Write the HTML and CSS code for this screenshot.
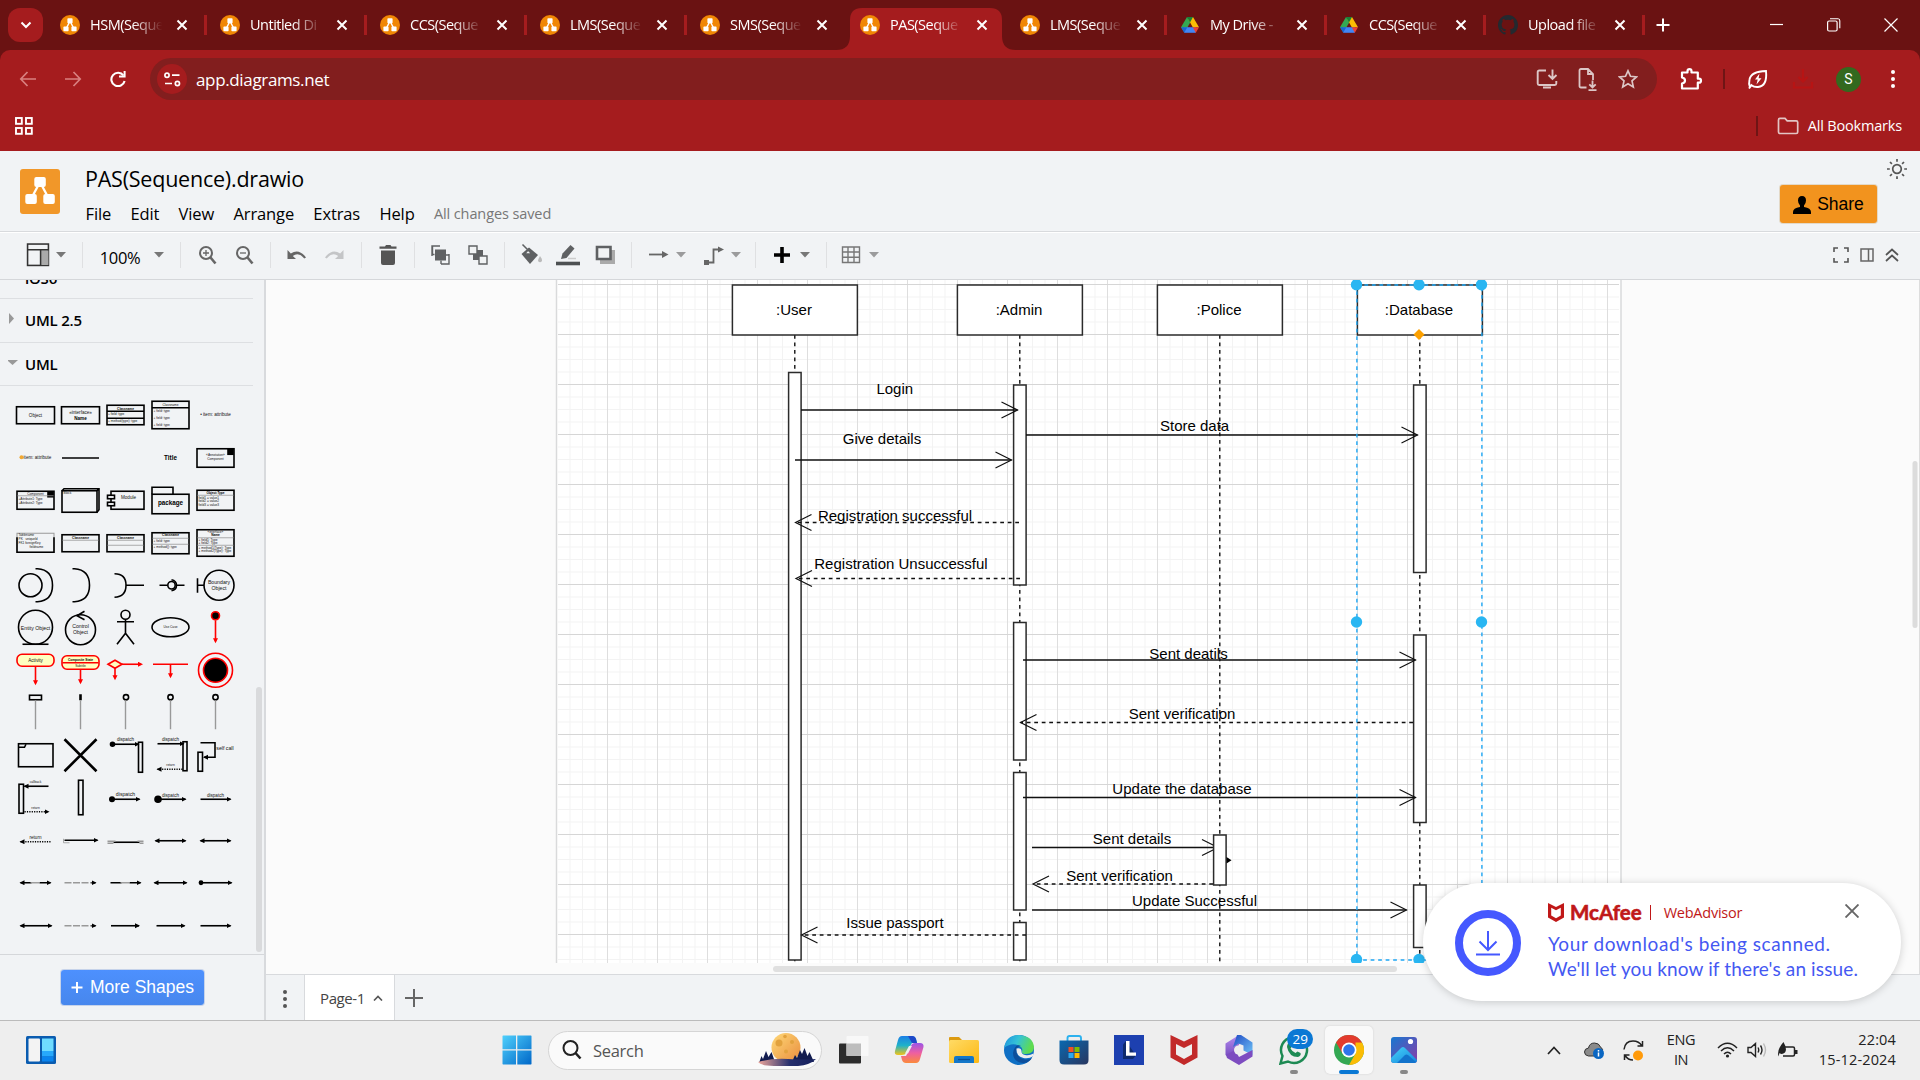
FILE: index.html
```html
<!DOCTYPE html>
<html lang="en">
<head>
<meta charset="utf-8">
<title>PAS(Sequence).drawio</title>
<link rel="stylesheet" href="styles.css">
</head>
<body>
<svg class="defs" width="0" height="0">
  <defs>
    <symbol id="x" viewBox="0 0 12 12"><path d="M1.5 1.5l9 9M10.5 1.5l-9 9" stroke="#fff" stroke-width="2" fill="none"/></symbol>
    <symbol id="fav" viewBox="0 0 20 20"><circle cx="10" cy="10" r="10" fill="#f08705"/><path d="M10 6L6 14M10 6l4 8" stroke="#fff" stroke-width="1.5"/><rect x="7.4" y="3.2" width="5.2" height="5" rx=".8" fill="#fff"/><rect x="3.4" y="11.6" width="5.2" height="4.6" rx=".8" fill="#fff"/><rect x="11.4" y="11.6" width="5.2" height="4.6" rx=".8" fill="#fff"/></symbol>
    <symbol id="drive" viewBox="0 0 20 20"><path d="M7 2h6l-3 5.5z" fill="#188038"/><path d="M7 2l3.2 5.5L4.5 17.5 1 12.2z" fill="#34a853"/><path d="M13 2l6 10.2h-6.2L7.8 3.5z" fill="#fbbc04"/><path d="M7 2h6l-3 5.4z" fill="#188038"/><path d="M4.2 12.2h11.6v5.6H4.2z" fill="#4285f4"/><path d="M1 12.2h6.3l-3.1 5.5z" fill="#1967d2"/><path d="M12.7 12.2H19l-3.2 5.5z" fill="#ea4335"/></symbol>
    <symbol id="caret" viewBox="0 0 10 6"><path d="M0 0h10L5 5.5z" fill="#777"/></symbol>
    <linearGradient id="win" x1="0" y1="0" x2="1" y2="1"><stop offset="0" stop-color="#4fd0fc"/><stop offset="1" stop-color="#0067c8"/></linearGradient>
    <linearGradient id="moon" x1="0" y1="0" x2="1" y2="1"><stop offset="0" stop-color="#ffd978"/><stop offset="1" stop-color="#e98d3d"/></linearGradient>
    <linearGradient id="lake" x1="0" x2="1"><stop offset="0" stop-color="#f0a79b"/><stop offset=".55" stop-color="#26306e"/><stop offset="1" stop-color="#15205c"/></linearGradient>
    <linearGradient id="copA" x1="0" y1="0" x2="0" y2="1"><stop offset="0" stop-color="#1b7fe6"/><stop offset=".5" stop-color="#1fb2c9"/><stop offset="1" stop-color="#f2c417"/></linearGradient>
    <linearGradient id="copB" x1="0" y1="0" x2="0" y2="1"><stop offset="0" stop-color="#9a54e8"/><stop offset=".5" stop-color="#ee5fa1"/><stop offset="1" stop-color="#fb8a3b"/></linearGradient>
    <linearGradient id="fold" x1="0" y1="0" x2="1" y2="1"><stop offset="0" stop-color="#ffdb66"/><stop offset="1" stop-color="#fdb813"/></linearGradient>
    <linearGradient id="edgeA" x1="0" y1="0" x2="1" y2=".3"><stop offset="0" stop-color="#1b8fe0"/><stop offset=".5" stop-color="#35c3d6"/><stop offset="1" stop-color="#5fdc4e"/></linearGradient>
    <linearGradient id="store" x1="0" y1="0" x2="1" y2="1"><stop offset="0" stop-color="#0a68b0"/><stop offset="1" stop-color="#28365f"/></linearGradient>
    <linearGradient id="mA" x1="0" y1="0" x2="0" y2="1"><stop offset="0" stop-color="#b58cf0"/><stop offset="1" stop-color="#6a3fb5"/></linearGradient>
    <linearGradient id="mB" x1="0" y1="0" x2="1" y2="1"><stop offset="0" stop-color="#1f4ac4"/><stop offset="1" stop-color="#6fc4f7"/></linearGradient>
    <linearGradient id="pho" x1="0" y1="0" x2="1" y2="1"><stop offset="0" stop-color="#1778d0"/><stop offset="1" stop-color="#8a3ca8"/></linearGradient>
    <linearGradient id="phb" x1="0" y1="0" x2="1" y2="1"><stop offset="0" stop-color="#45d3f8"/><stop offset="1" stop-color="#1484dd"/></linearGradient>
    <pattern id="grid" x="557" y="284" width="50" height="50" patternUnits="userSpaceOnUse">
      <path d="M13 0v50M25.500 0v50M38 0v50M0 13h50M0 25.500h50M0 38h50" stroke="#f3f3f3" stroke-width="1" fill="none"/>
      <path d="M.5 0v50" stroke="#dedede" stroke-width="1" fill="none"/>
      <path d="M0 .5h50" stroke="#d6d6d6" stroke-width="1" fill="none"/>
    </pattern>
    <marker id="ah" markerUnits="userSpaceOnUse" markerWidth="20" markerHeight="20" refX="17" refY="10" orient="auto"><path d="M1 2l16 8-16 8" fill="none" stroke="#111" stroke-width="1.2"/></marker>
    <marker id="se" markerUnits="userSpaceOnUse" markerWidth="6" markerHeight="6" refX="4" refY="2.5" orient="auto-start-reverse"><path d="M0 0l5 2.5L0 5z" fill="#000"/></marker>
    <marker id="sr" markerUnits="userSpaceOnUse" markerWidth="6" markerHeight="6" refX="3" refY="2.5" orient="auto"><path d="M0 0l5 2.5L0 5z" fill="#f00"/></marker>
  </defs>
</svg>

<header class="tabs">
  <button class="tab-search"><svg width="12" height="8" viewBox="0 0 12 8"><path d="M1.5 1.5L6 6l4.500-4.500" fill="none" stroke="#fff" stroke-width="2"/></svg></button>
  <div class="tab"><svg class="f"><use href="#fav"/></svg><span>HSM(Seque</span><svg class="c"><use href="#x"/></svg></div>
  <div class="tab"><svg class="f"><use href="#fav"/></svg><span>Untitled Di</span><svg class="c"><use href="#x"/></svg></div>
  <div class="tab"><svg class="f"><use href="#fav"/></svg><span>CCS(Seque</span><svg class="c"><use href="#x"/></svg></div>
  <div class="tab"><svg class="f"><use href="#fav"/></svg><span>LMS(Seque</span><svg class="c"><use href="#x"/></svg></div>
  <div class="tab bare"><svg class="f"><use href="#fav"/></svg><span>SMS(Seque</span><svg class="c"><use href="#x"/></svg></div>
  <div class="tab active"><svg class="shape" width="180" height="42" viewBox="0 0 180 42"><path d="M0 42q14 0 14-14V12Q14 0 26 0h128q12 0 12 12v16q0 14 14 14z" fill="#a51c1e"/></svg><svg class="f"><use href="#fav"/></svg><span>PAS(Seque</span><svg class="c"><use href="#x"/></svg></div>
  <div class="tab"><svg class="f"><use href="#fav"/></svg><span>LMS(Seque</span><svg class="c"><use href="#x"/></svg></div>
  <div class="tab slim"><svg class="f"><use href="#drive"/></svg><span>My Drive -</span><svg class="c"><use href="#x"/></svg></div>
  <div class="tab slim"><svg class="f"><use href="#drive"/></svg><span>CCS(Seque</span><svg class="c"><use href="#x"/></svg></div>
  <div class="tab slim"><svg class="f" viewBox="0 0 16 16"><path fill="#24292f" d="M8 0C3.58 0 0 3.58 0 8c0 3.54 2.290 6.530 5.470 7.590.4.070.55-.17.55-.38v-1.490c-2.010.37-2.530-.49-2.690-.94-.09-.23-.48-.94-.82-1.130-.28-.15-.68-.52-.01-.53.63-.01 1.080.58 1.230.82.72 1.210 1.870.87 2.330.66.07-.52.28-.87.51-1.070-1.780-.2-3.640-.89-3.640-3.950 0-.87.31-1.590.82-2.150-.08-.2-.36-1.020.08-2.120 0 0 .67-.21 2.200.82a7.600 7.600 0 014 0c1.530-1.040 2.200-.82 2.200-.82.44 1.100.16 1.920.08 2.120.51.56.82 1.270.82 2.150 0 3.070-1.870 3.750-3.650 3.950.29.25.54.73.54 1.480v2.200c0 .21.15.46.55.38A8 8 0 0016 8c0-4.420-3.580-8-8-8z"/></svg><span>Upload file</span><svg class="c"><use href="#x"/></svg></div>
  <svg class="newtab" width="14" height="14" viewBox="0 0 14 14"><path d="M7 .5v13M.5 7h13" stroke="#fff" stroke-width="2"/></svg>
  <div class="winctl">
    <svg width="14" height="14"><path d="M0 6.500h13" stroke="#fff" stroke-width="1.200"/></svg>
    <svg width="14" height="14"><rect x=".6" y="3" width="9.500" height="10" rx="1.500" fill="none" stroke="#fff" stroke-width="1.200"/><path d="M3 .8h8q1.800 0 1.800 2v7.500" fill="none" stroke="#fff" stroke-width="1.100"/></svg>
    <svg width="14" height="14"><path d="M.5.500l13 13M13.500.500l-13 13" stroke="#fff" stroke-width="1.200"/></svg>
  </div>
</header>

<div class="navwrap"><nav class="nav">
  <div class="navbtns">
    <svg width="18" height="16" viewBox="0 0 18 16"><path d="M17 8H2M8.500 1L1.800 8l6.700 7" fill="none" stroke="#d98080" stroke-width="1.700"/></svg>
    <svg width="18" height="16" viewBox="0 0 18 16"><path d="M1 8h15M9.500 1l6.700 7-6.700 7" fill="none" stroke="#d98080" stroke-width="1.700"/></svg>
    <svg width="18" height="16" viewBox="0 0 18 16"><path d="M14.500 4.500A6.700 6.700 0 1 0 15.600 10" fill="none" stroke="#fff" stroke-width="2.100"/><path d="M16.600 0v6.600H10v-2h4.600V0z" fill="#fff"/></svg>
  </div>
  <div class="omni">
    <span class="site"><svg width="17" height="15" viewBox="0 0 17 15"><g fill="none" stroke="#fff" stroke-width="1.700"><circle cx="3" cy="3.200" r="2.100"/><path d="M8 3.200h7.500M1 11.500h7"/><circle cx="13.400" cy="11.500" r="2.100"/></g></svg></span>
    <span class="url">app.diagrams.net</span>
    <span class="omni-icons">
      <svg width="22" height="22" viewBox="0 0 22 22" fill="none" stroke="#dcc6c6" stroke-width="1.900"><path d="M10 2.500H3.200q-1.500 0-1.500 1.500v11.500q0 1.500 1.500 1.500h15.600q1.500 0 1.500-1.500V13M7 19.500h8M16.500 1.500v9M12.500 7l4 4 4-4"/></svg>
      <svg width="22" height="24" viewBox="0 0 22 24" fill="none" stroke="#dcc6c6" stroke-width="1.800"><path d="M9.500 20.500H4q-1.500 0-1.500-1.500V3.500Q2.500 2 4 2h7l5 5v6M11 2v5h5M15.500 13.500v7M12.300 17.300l3.200 3.200 3.200-3.200M11.500 23.200h8"/></svg>
      <svg width="20" height="20" viewBox="0 0 20 20" fill="none" stroke="#dcc6c6" stroke-width="1.700"><path d="M10 1.800l2.500 5.500 6 .6-4.500 4 1.300 6L10 14.700 4.700 17.900l1.300-6-4.500-4 6-.6z"/></svg>
    </span>
  </div>
  <div class="navright">
    <svg width="24" height="24" viewBox="0 0 24 24" fill="none" stroke="#fff" stroke-width="2.200"><path d="M3 5.500h5.500V4.200a2 2 0 0 1 4 0v1.300h6.300v6.200H20a2 2 0 0 1 0 4h-1.200v5.800H3v-5q3-.5 3-3t-3-3z" stroke-linejoin="round"/></svg>
    <i class="vr"></i>
    <svg class="leaf" width="22" height="22" viewBox="0 0 22 22" fill="none" stroke="#fff" stroke-width="1.900"><path d="M3 19.500q-1.500-4-.5-8Q4 3.500 19 3q1.500 15-8 16-4 .3-6.500-1.800L2 20.500"/><path d="M12.500 5.500l-4.500 6h2.700l-1.200 5 5-6.300h-2.900z" fill="#fff" stroke="none"/></svg>
    <svg width="22" height="22" viewBox="0 0 22 22" fill="none" stroke="#b71414" stroke-width="2.200"><path d="M11 1v12M6.500 9l4.500 4.500L15.500 9M2 14v5.500h18V14"/></svg>
    <b class="avatar">S</b>
    <svg class="dots" width="6" height="20"><g fill="#fff"><circle cx="3" cy="3" r="2"/><circle cx="3" cy="10" r="2"/><circle cx="3" cy="17" r="2"/></g></svg>
  </div>
</nav></div>

<div class="bookmarks">
  <svg width="20" height="20" viewBox="0 0 20 20" fill="none" stroke="#fff" stroke-width="1.900"><rect x="2" y="2" width="5.800" height="5.800"/><rect x="12" y="2" width="5.800" height="5.800"/><rect x="2" y="12" width="5.800" height="5.800"/><rect x="12" y="12" width="5.800" height="5.800"/></svg>
  <div class="allbm"><i class="vr"></i><svg width="22" height="18" viewBox="0 0 22 18"><path d="M1.500 15V3q0-1.600 1.500-1.600h5l2.200 2.400h9q1.500 0 1.500 1.500V15q0 1.500-1.500 1.500H3q-1.500 0-1.500-1.500z" fill="none" stroke="#e3c4c4" stroke-width="1.700"/></svg><span>All Bookmarks</span></div>
</div>

<section class="apphead">
  <svg class="logo" width="40" height="45" viewBox="0 0 40 45"><rect width="40" height="45" rx="3" fill="#f19729"/><path d="M20 13L11 30M20 13l9 17" stroke="#fff" stroke-width="2.300"/><rect x="14.300" y="8" width="11.500" height="10" rx="2" fill="#fff"/><rect x="5.300" y="25" width="11.500" height="10" rx="2" fill="#fff"/><rect x="23.300" y="25" width="11.500" height="10" rx="2" fill="#fff"/></svg>
  <div class="titles">
    <h1>PAS(Sequence).drawio</h1>
    <div class="menu"><span>File</span><span>Edit</span><span>View</span><span>Arrange</span><span>Extras</span><span>Help</span><em>All changes saved</em></div>
  </div>
  <div class="headright">
    <svg width="22" height="22" viewBox="-11 -11 22 22" fill="none" stroke="#555" stroke-width="1.700"><circle r="4.300"/><path d="M0-10v2.800M0 7.200V10M-10 0h2.800M7.200 0H10M-7-7l1.900 1.900M5.100 5.100L7 7M-7 7l1.900-1.900M5.100-5.100L7-7"/></svg>
    <button class="share"><svg width="18" height="18" viewBox="0 0 18 18"><path d="M9 0q4 0 4 4.500 0 3-2 5v1.500q7 1.200 7 5v2H0v-2q0-3.800 7-5V9.500q-2-2-2-5Q5 0 9 0z"/></svg>Share</button>
  </div>
</section>

<section class="toolbar">
  <div class="g g1"><svg width="22" height="23" viewBox="0 0 22 23"><rect x="1" y="1" width="20" height="20.500" fill="none" stroke="#333" stroke-width="1.500"/><rect x="14" y="7" width="7" height="14" fill="#aaa"/><path d="M1 6.500h20M13.500 6.500v15" stroke="#333" stroke-width="1.500"/></svg><svg class="k"><use href="#caret"/></svg></div>
  <div class="g g2"><span>100%</span><svg class="k"><use href="#caret"/></svg></div>
  <div class="g g3">
    <svg viewBox="0 0 24 24"><g fill="none" stroke="#666" stroke-width="2"><circle cx="11" cy="10" r="6"/><path d="M15.500 14.500l5 6" stroke-width="2.600"/><path d="M8 10h6M11 7v6" stroke-width="1.300"/></g></svg>
    <svg viewBox="0 0 24 24"><g fill="none" stroke="#666" stroke-width="2"><circle cx="11" cy="10" r="6"/><path d="M15.500 14.500l5 6" stroke-width="2.600"/><path d="M8 10h6" stroke-width="1.300"/></g></svg>
  </div>
  <div class="g g3">
    <svg viewBox="0 0 24 24"><path d="M2.500 7v9H11L7.800 13q5.700-4.500 11.500 2.500l1.700-1Q14 5 5.800 10.500z" fill="#666"/></svg>
    <svg viewBox="0 0 24 24"><path d="M21.500 7v9H13l3.200-3q-5.700-4.500-11.500 2.500L3 14.500q7-9.500 15.200-4z" fill="#c4c5c7"/></svg>
  </div>
  <div class="g g5"><svg viewBox="0 0 24 24"><path d="M3.500 3.500h5.500L10 2h4.500l1 1.500h5v2.300h-17zM5 7.500h14V20q0 2-2 2H7q-2 0-2-2z" fill="#555"/></svg></div>
  <div class="g g3">
    <svg viewBox="0 0 24 24"><rect x="6" y="6.500" width="11" height="11" fill="#5f6163"/><path d="M3 13V3h8M20 11v10h-8M3.500 3v8.500h2M20 12h-3M12 17.500V21" fill="none" stroke="#5f6163" stroke-width="1.400"/></svg>
    <svg viewBox="0 0 24 24"><rect x="7" y="7" width="10" height="10" fill="#5f6163"/><path d="M3 3h8v8H3zM13 13h8v8h-8z" fill="#f1f3f4" stroke="#5f6163" stroke-width="1.400"/></svg>
  </div>
  <div class="g g7">
    <svg viewBox="0 0 24 24"><path d="M2.500 11L10 4.500 19 12 11 21z" fill="#5f6163"/><path d="M3.500 1.500l10 10M5.500 11L10 6l5 5z" stroke="#5f6163" stroke-width="1.500" fill="#f1f3f4"/><path d="M21 13q2.500 3.200 2 5-2 2.500-4 0 0-1.800 2-5z" fill="#bbb"/></svg>
    <svg viewBox="0 0 24 24"><path d="M5 16l1.500-5.500L14.500 2l4 3.500-8 9.500z" fill="#5f6163"/><path d="M12 15.500h8" stroke="#ccc" stroke-width="1.500"/><path d="M-1 20.500h26" stroke="#4d5052" stroke-width="3.600"/></svg>
    <svg viewBox="0 0 24 24"><path d="M7 7h15v14H7z" fill="#aaa"/><path d="M4 4h13.500v12H4z" fill="#f1f3f4" stroke="#5f6163" stroke-width="2.600"/></svg>
  </div>
  <div class="g g8">
    <svg viewBox="0 0 24 24"><path d="M2 11.500h17" stroke="#666" stroke-width="1.800"/><path d="M15 8l6.500 3.500-6.500 3.500z" fill="#666"/></svg><svg class="k pale"><use href="#caret"/></svg>
    <svg viewBox="0 0 24 24"><path d="M4 19.500h7.500v-13H19" stroke="#666" stroke-width="1.800" fill="none"/><path d="M16 3.500l6 3-6 3z" fill="#666"/><path d="M2 17h5v5H2z" fill="#666"/></svg><svg class="k pale"><use href="#caret"/></svg>
  </div>
  <div class="g g9"><svg viewBox="0 0 24 24"><path d="M12 4v16M4 12h16" stroke="#000" stroke-width="3.600"/></svg><svg class="k"><use href="#caret"/></svg></div>
  <div class="g g10"><svg viewBox="0 0 24 24"><path d="M3.500 4h17v15.500h-17zM9 4v15.500M15 4v15.500M3.500 9h17M3.500 14.300h17" stroke="#777" stroke-width="1.400" fill="none"/></svg><svg class="k pale"><use href="#caret"/></svg></div>
  <div class="tbright">
    <svg width="16" height="16" viewBox="0 0 16 16" fill="none" stroke="#555" stroke-width="1.600"><path d="M1 5V1h4M11 1h4v4M15 11v4h-4M5 15H1v-4"/></svg>
    <svg width="14" height="14" viewBox="0 0 14 14" fill="none" stroke="#666" stroke-width="1.500"><path d="M1 1h12v12H1zM8.500 1v12"/></svg>
    <svg width="14" height="14" viewBox="0 0 14 14" fill="none" stroke="#555" stroke-width="1.700"><path d="M1 7l6-5.500L13 7M1 13l6-5.500 6 5.500"/></svg>
  </div>
</section>

<main class="work">
  <aside class="side">
    <div class="cats">
      <div class="cat first"><svg class="tri" width="10" height="12"><path d="M1 0v11l5-5.500z" fill="#999"/></svg>iOS6</div>
      <div class="cat"><svg class="tri" width="10" height="12"><path d="M1 0v11l5-5.500z" fill="#999"/></svg>UML 2.5</div>
      <div class="cat"><svg class="tri" width="11" height="12"><path d="M-1 3h11L4.500 8z" fill="#999"/></svg>UML</div>
    </div>
    <div class="pal">
      <svg><rect x="-19" y="-8.500" width="38" height="17"/><text y="1.800">Object</text></svg>
      <svg><rect x="-19" y="-8.500" width="38" height="17"/><text y="-1">«interface»</text><text y="4.500" class="b">Name</text></svg>
      <svg><rect x="-18.500" y="-10" width="37" height="19.500"/><path d="M-18.500-4h37M-18.500 3h37"/><text y="-5.300" class="s b">Classname</text><text x="-17.500" y="0" class="s l">+ field: type</text><text x="-17.500" y="7" class="s l">+ method(type): type</text></svg>
      <svg><rect x="-18.500" y="-14" width="37" height="27.500"/><path d="M-18.500-7.500h37"/><text y="-9.500" class="s">Classname</text><text x="-17" y="-3" class="s l">+ field: type</text><text x="-17" y="4" class="s l">+ field: type</text><text x="-17" y="11" class="s l">+ field: type</text></svg>
      <svg><text y="1">• item: attribute</text></svg>
      <svg><circle cx="-14" cy="0" r="2" fill="#f0a830" stroke="none"/><text x="2" y="1.500">item: attribute</text></svg>
      <svg><path d="M-18.500 .8h37"/></svg>
      <svg></svg>
      <svg><text y="2.500" class="b m">Title</text></svg>
      <svg><rect x="-18.500" y="-8.500" width="37" height="18.500"/><rect x="12.500" y="-7.500" width="5" height="4.500" class="k"/><text y="-1" class="s">«Annotation»</text><text y="3" class="s">Component</text></svg>
      <svg><rect x="-18.500" y="-9" width="37" height="18"/><rect x="12.500" y="-8" width="5" height="4.500" class="k"/><path d="M-18-4.500h36" class="t"/><text y="-5.500" class="s">Component</text><text x="-17" y="0" class="s l">+Attribute1: Type</text><text x="-17" y="3.500" class="s l">+Attribute2: Type</text></svg>
      <svg><rect x="-18.500" y="-9.500" width="35" height="21.500"/><path d="M-18.500-9.500l2-2h35v21l-2 2.500M16.500-9.500l2-2" /><text x="-17" y="-6" class="s l">Block</text></svg>
      <svg><rect x="-14.500" y="-9" width="33" height="18"/><rect x="-18" y="-5" width="7" height="3.500" class="w"/><rect x="-18" y="2" width="7" height="3.500" class="w"/><text x="3" y="-1.500">Module</text></svg>
      <svg><path d="M-18.500-6v-7h21v7"/><rect x="-18.500" y="-6" width="37" height="19.500"/><text y="4.800" class="b m">package</text></svg>
      <svg><rect x="-18.500" y="-10" width="37" height="20"/><path d="M-18-5h36" class="t"/><text y="-6.500" class="s b">Object:Type</text><text x="-17" y="-1.500" class="s l">field1 = value1</text><text x="-17" y="2" class="s l">field2 = value2</text><text x="-17" y="6" class="s l">field3 = value3</text></svg>
      <svg><rect x="-18.500" y="-9" width="37" height="19" class="h"/><path d="M-18.500-5v15h37V-5"/><text x="-17" y="-6" class="s l">Tablename</text><text x="-17" y="-2" class="s l">PK&#160;&#160;&#160;uniqueId</text><text x="-17" y="2" class="s l">FK1&#160;foreignKey</text><text x="-6" y="6" class="s l">fieldname</text></svg>
      <svg><rect x="-18.500" y="-7.500" width="37" height="17"/><path d="M-18-2h36" class="t"/><text y="-3.500" class="s b">Classname</text></svg>
      <svg><rect x="-18.500" y="-7.500" width="37" height="17"/><path d="M-18-2h36M-18 3h36" class="t"/><text y="-3.500" class="s b">Classname</text></svg>
      <svg><rect x="-18.500" y="-9.500" width="37" height="21"/><path d="M-18-4h36M-18 2h36" class="t"/><text y="-6" class="s b">Classname</text><text x="-17" y="-.5" class="s l">+ field: type</text><text x="-17" y="5.500" class="s l">+ method(): type</text></svg>
      <svg><rect x="-18.500" y="-12.500" width="37" height="26.500"/><path d="M-18-4.500h36M-18 3h36" class="t"/><text y="-9" class="s">«interface»</text><text y="-6" class="s b">Name</text><text x="-17" y="-1.500" class="s l">+ field1: Type</text><text x="-17" y="1.500" class="s l">+ field2: Type</text><text x="-17" y="7" class="s l">+ method1(Type): Type</text><text x="-17" y="10" class="s l">+ method2(Type): Type</text></svg>
      <svg><circle cx="-5" r="11.500"/><path d="M0-16.500h2q15 1 15 16.500t-15 16.500h-2"/></svg>
      <svg><path d="M-8-16.500h2q15 1 15 16.500t-15 16.500h-2"/></svg>
      <svg><path d="M-11-11.500q11.500 0 11.500 11.500t-11.500 12M.5 0h18"/></svg>
      <svg><path d="M-11 0h8M6 0h8M1-5.500q5 1 5 5.500t-5 5.500"/><circle cx="1" r="3.700"/></svg>
      <svg><circle cx="3.500" r="15"/><path d="M-18-7v14.500M-18 0h6.500"/><text x="3.500" y="-1" class="o">Boundary</text><text x="3.500" y="4.500" class="o">Object</text></svg>
      <svg><circle r="17"/><path d="M-13 17h26"/><text y="2.500" class="o">Entity Object</text></svg>
      <svg><circle cy="2.500" r="15"/><path d="M4-16l-7.500 4.500 7.500 4"/><text y="1" class="o">Control</text><text y="7" class="o">Object</text></svg>
      <svg><circle cy="-12.500" r="4.500"/><path d="M0-8V7M-8.500-5.500h17M0 6l-8.500 11M0 6l8.500 11"/></svg>
      <svg><ellipse rx="18.500" ry="9.500"/><text y="1.200" class="s">Use Case</text></svg>
      <svg><circle cy="-11.500" r="4" fill="#000" stroke="red"/><path d="M0-7v21" class="r" marker-end="url(#sr)"/></svg>
      <svg><rect x="-18.500" y="-16" width="37" height="12" rx="5" class="y"/><text y="-8.500">Activity</text><path d="M0-4v17" class="r" marker-end="url(#sr)"/></svg>
      <svg><rect x="-18.500" y="-14.500" width="37" height="13.500" rx="5" class="y"/><path d="M-18-7.500h36" class="r"/><text y="-9.500" class="s b">Composite State</text><text y="-3.500" class="s">Subtitle</text><path d="M0-1v13" class="r" marker-end="url(#sr)"/></svg>
      <svg><path d="M-17.500-6l7-4 7 4-7 4z" class="y"/><path d="M-3.500-6h19" class="r" marker-end="url(#sr)"/><path d="M-10.500-2V8" class="r" marker-end="url(#sr)"/></svg>
      <svg><path d="M-17.500-6h35" class="r"/><path d="M0-6V6" class="r" marker-end="url(#sr)"/></svg>
      <svg><circle r="17" class="r"/><circle r="12" fill="#000" stroke="red" stroke-width="2"/></svg>
      <svg><rect x="-6" y="-17" width="12" height="4.500"/><path d="M0-12v29" class="t2"/></svg>
      <svg><path d="M0-18v6" class="x"/><path d="M0-12v29" class="t2"/></svg>
      <svg><circle cx=".5" cy="-15" r="2.600"/><path d="M0-12v29" class="t2"/></svg>
      <svg><circle cy="-15" r="2.600"/><path d="M0-12v29" class="t2"/></svg>
      <svg><circle cy="-15" r="2.600"/><path d="M0-12v29" class="t2"/></svg>
      <svg><rect x="-17" y="-11.500" width="34.500" height="23"/><path d="M-17-8h6l1.500-3"/></svg>
      <svg><path d="M-16-16l32 32M16-16l-32 32" class="x"/></svg>
      <svg><circle cx="-13" cy="-11" r="2" fill="#000"/><path d="M-12-11h25" marker-end="url(#se)"/><rect x="13" y="-13" width="4" height="30"/><text y="-14">dispatch</text></svg>
      <svg><path d="M-13-11.500h26" marker-end="url(#se)"/><path d="M12 14h-25" stroke-dasharray="1.200 1.200" marker-end="url(#se)"/><rect x="12.500" y="-13.500" width="4" height="29"/><text y="-14.500">dispatch</text><text y="11" class="s">return</text></svg>
      <svg><path d="M-15-12.500H-.5V2h-11" marker-end="url(#se)"/><rect x="-17.500" y="-3" width="4.500" height="19"/><text x="9.500" y="-5" class="o">self call</text></svg>
      <svg><rect x="-16.500" y="-13" width="4.500" height="29"/><path d="M13-11h-24" marker-end="url(#se)"/><path d="M-11 14.500h24" stroke-dasharray="1.200 1.200" marker-end="url(#se)"/><text y="-14" class="s">callback</text><text y="11.500" class="s">return</text></svg>
      <svg><rect x="-2" y="-17" width="4.500" height="34.500"/></svg>
      <svg><circle cx="-13.500" cy="2" r="2.200" fill="#000"/><path d="M-12 2h26" marker-end="url(#se)"/><text y="-1.500" class="o">dispatch</text></svg>
      <svg><circle cx="-12.500" cy="2" r="3" fill="#000"/><path d="M-10 2h25" marker-end="url(#se)"/><text y="-.5">dispatch</text></svg>
      <svg><path d="M-15 2h30" marker-end="url(#se)"/><text y="-.5">dispatch</text></svg>
      <svg><path d="M15 1.500h-30" stroke-dasharray="1.200 1.200" marker-end="url(#se)"/><text y="-1">return</text></svg>
      <svg><path d="M-16 0h33" marker-end="url(#se)"/><path d="M-17-1.500v4h6" class="t"/></svg>
      <svg><path d="M-12 2h26"/><path d="M-18 1h8M12 1h6M-18 3h6M14 3h4" class="t2"/></svg>
      <svg><path d="M-15 .5h30" marker-end="url(#se)" marker-start="url(#se)"/></svg>
      <svg><path d="M-15 .5h30" marker-end="url(#se)" marker-start="url(#se)"/></svg>
      <svg><path d="M-15 .5h11M4 .5h11" marker-end="url(#se)" marker-start="url(#se)"/><path d="M-5 .5h9" class="t2"/></svg>
      <svg><path d="M-16 .5h28" class="t2" stroke-dasharray="7 1.500"/><path d="M11 .5h4" marker-end="url(#se)"/></svg>
      <svg><path d="M-15 .5h11M4 .5h11" marker-end="url(#se)"/><path d="M-5 .5h9" class="t2"/></svg>
      <svg><path d="M-16 .5h32" marker-end="url(#se)" marker-start="url(#se)"/></svg>
      <svg><circle cx="-14.500" cy=".5" r="1.600" fill="#000"/><path d="M-14 .5h30" marker-end="url(#se)"/></svg>
      <svg><path d="M-15 .5h31" marker-end="url(#se)" marker-start="url(#se)"/></svg>
      <svg><path d="M-16 .5h28" class="t2" stroke-dasharray="7 1.500"/><path d="M11 .5h4" marker-end="url(#se)"/></svg>
      <svg><path d="M-14.500 .5h28" marker-end="url(#se)"/></svg>
      <svg><path d="M-14 .5h28" marker-end="url(#se)"/></svg>
      <svg><path d="M-15 .5h30" marker-end="url(#se)"/></svg>
    </div>
    <i class="vbar"></i>
    <div class="sidefoot"><button class="more"><svg width="12" height="12"><path d="M6 0v11M.5 5.500h11" stroke="#fff" stroke-width="2"/></svg>More Shapes</button></div>
  </aside>

  <div class="right">
    <svg class="canvas" width="1654" height="694" viewBox="266 280 1654 694">
      <rect x="266" y="280" width="1654" height="694" fill="#fbfbfb"/>
      <rect x="557" y="270" width="1063.500" height="693" fill="#fff"/>
      <rect x="558" y="280" width="1061" height="683" fill="url(#grid)"/>
      <path d="M556.500 280v683M1621 280v683" stroke="#d9dadb" stroke-width="1.500"/>
      <g class="life" fill="none" stroke="#000" stroke-width="1.300" stroke-dasharray="3.750 3.750">
        <path d="M794.800 335v628M1019.800 335v628M1219.800 335v628M1419.800 335v628"/>
      </g>
      <g fill="#fff" stroke="#2b2b2b" stroke-width="1.500">
        <path d="M732.400 285h125v50h-125zM957.400 285h125v50h-125zM1157.400 285h125v50h-125zM1357.400 285h125v50h-125z"/>
        <path d="M788.600 372.500h12.500V960h-12.500zM1013.600 385h12.500v200h-12.500zM1013.600 622.500h12.500V760h-12.500zM1013.600 772.500h12.500V910h-12.500zM1013.600 922.500h12.500V960h-12.500zM1413.600 385h12.500v187.500h-12.500zM1413.600 635h12.500v187.500h-12.500zM1413.600 885h12.500v62.500h-12.500z"/>
      </g>
      <g fill="none" stroke="#111" stroke-width="1.300">
        <path d="M801 410h216.500" marker-end="url(#ah)"/>
        <path d="M795 460h216.500" marker-end="url(#ah)"/>
        <path d="M1026 435h391.500" marker-end="url(#ah)"/>
        <path d="M1023 660h392.500" marker-end="url(#ah)"/>
        <path d="M1023 797.500h392.500" marker-end="url(#ah)"/>
        <path d="M1032 847.500h186" marker-end="url(#ah)"/>
        <path d="M1032 910h374.500" marker-end="url(#ah)"/>
        <g stroke-dasharray="3.750 3.750">
          <path d="M1019 522.500H795.500" marker-end="url(#ah)"/>
          <path d="M1020 578.500H796" marker-end="url(#ah)"/>
          <path d="M1413 722.500h-392.500" marker-end="url(#ah)"/>
          <path d="M1213 884h-180" marker-end="url(#ah)"/>
          <path d="M1026 935H801.500" marker-end="url(#ah)"/>
        </g>
      </g>
      <path d="M1213.600 835h12.500v50h-12.500z" fill="#fff" stroke="#2b2b2b" stroke-width="1.500"/>
      <path d="M1226.500 857l5 3.200-5 3.200z" fill="#000"/>
      <g class="lbl">
        <text x="794" y="315">:User</text><text x="1019" y="315">:Admin</text><text x="1219" y="315">:Police</text><text x="1419" y="315">:Database</text>
        <text x="894.800" y="394">Login</text><text x="882" y="444">Give details</text><text x="1194.600" y="431">Store data</text>
        <text x="895" y="521">Registration successful</text><text x="901" y="569">Registration Unsuccessful</text>
        <text x="1188.500" y="659">Sent deatils</text><text x="1182" y="719">Sent verification</text><text x="1182" y="794">Update the database</text>
        <text x="1132" y="844">Sent details</text><text x="1119.500" y="881">Sent verification</text><text x="1194.500" y="906">Update Successful</text><text x="895" y="928">Issue passport</text>
      </g>
      <rect x="1356.900" y="285" width="125" height="675" fill="none" stroke="#1ea7f5" stroke-width="1.400" stroke-dasharray="3.750 3.750"/>
      <g fill="#29b6f2"><circle cx="1356.500" cy="284.700" r="5.700"/><circle cx="1419" cy="284.700" r="5.700"/><circle cx="1481.500" cy="284.700" r="5.700"/><circle cx="1356.500" cy="622" r="5.700"/><circle cx="1481.500" cy="622" r="5.700"/><circle cx="1356.500" cy="959.500" r="5.700"/><circle cx="1419" cy="959.500" r="5.700"/></g>
      <path d="M1419 329l5.500 5.500-5.500 5.500-5.500-5.500z" fill="#fca000"/>
      <rect x="266" y="963" width="1654" height="11" fill="#fbfbfb"/>
      <rect x="773" y="966" width="624" height="6" rx="3" fill="#e0e0e0"/>
      <rect x="1912.500" y="461" width="5" height="167" rx="2.500" fill="#dcdcdc"/>
      <path d="M1919.500 280v694" stroke="#ddd"/>
    </svg>
    <footer class="pages">
      <svg width="38" height="46"><g fill="#555"><circle cx="19" cy="17" r="2"/><circle cx="19" cy="24" r="2"/><circle cx="19" cy="31" r="2"/></g></svg>
      <div class="page">Page-1<svg width="10" height="6"><path d="M1 5.500L5 1.500l4 4" fill="none" stroke="#555" stroke-width="1.600"/></svg></div>
      <svg class="add" width="18" height="18"><path d="M9 0v18M0 9h18" stroke="#666" stroke-width="2"/></svg>
    </footer>
  </div>
</main>

<aside class="toast">
  <svg class="ring" width="66" height="66" viewBox="-33 -33 66 66" fill="none" stroke="#4558ff"><circle r="29" stroke-width="8"/><path d="M0-12V7M-8.500-1.500L0 7l8.500-8.500M-12 11.500h24" stroke-width="2"/></svg>
  <div class="tbody">
    <div class="brand"><svg width="16" height="19" viewBox="0 0 16 19"><path d="M0 0l8 4 8-4v14.500L8 19l-8-4.500zM3.200 4.800v7.700L8 15.300l4.800-2.800V4.800L8 7.300z" fill="#c01818" fill-rule="evenodd"/></svg><b>McAfee</b><i></i><span>WebAdvisor</span></div>
    <p><span class="wide">Your download's being scanned.</span><br><span class="tight">We'll let you know if there's an issue.</span></p>
  </div>
  <svg class="tclose" width="14" height="14"><path d="M.5.500l13 13M13.500.500l-13 13" stroke="#666" stroke-width="1.900"/></svg>
</aside>

<footer class="task">
  <svg class="widget" width="30" height="28" viewBox="0 0 30 28"><rect width="30" height="28" rx="1.500" fill="#0a5cb0"/><rect x="2.500" y="2.500" width="11.500" height="23" rx="1" fill="#f3f3f3"/><path d="M16 2.500h11.500V15H16z" fill="#6fdcff"/><path d="M16 15h11.500v5.500H16z" fill="#27a9fb"/><path d="M16 20.500h11.500v5H16z" fill="#0a84ee"/></svg>
  <svg class="start" width="30" height="30" viewBox="0 0 30 30"><path d="M1 .5h13v13.700H.5V1zM15.300.5H29l.5.500v13.200H15.300zM.5 15.500H14v14H1l-.5-.5zM15.300 15.500h14.200V29l-.5.500H15.300z" fill="url(#win)"/></svg>
  <div class="search">
    <svg width="20" height="20" viewBox="0 0 20 20" fill="none" stroke="#222" stroke-width="2"><circle cx="8.500" cy="8" r="7"/><path d="M13.500 13l5 5.500" stroke-width="2.600"/></svg><span>Search</span>
    <svg class="moon" width="58" height="36" viewBox="0 0 58 36"><circle cx="28" cy="15.500" r="14.500" fill="url(#moon)"/><g fill="#e2a23e"><circle cx="21" cy="11" r="3.500"/><circle cx="34" cy="10" r="2"/><circle cx="28" cy="19.500" r="2"/><circle cx="27" cy="4.500" r="1.800"/></g><path d="M1 31l2.500-7 1.500 3 3-8 2.500 6 3-5 3.500 10zM34 30l3-7 2 3 3-8 2 4 2.500-6 3 8 2-4 4.500 10z" fill="#121c4f"/><path d="M0 30q14-4 30-3t28 0q-6 6-18 7H16Q3 34 0 30z" fill="url(#lake)"/></svg>
  </div>
  <div class="apps">
    <span><svg viewBox="0 0 30 30"><rect x="0" y="8.500" width="22" height="20" rx="1" fill="#2c2c2c"/><rect x="7.500" y="1" width="22" height="20" rx="1" fill="#f8f8f8"/><path d="M7.500 8.500H22V21H7.500z" fill="#bdbdbd"/></svg></span>
    <span><svg viewBox="0 0 30 30"><path d="M8 1h10q3 0 4 3l1 4h-5l-6 10q-1 2-4 2H4q-4 0-3-4l3-11q1-4 4-4z" fill="url(#copA)"/><path d="M22 28H12q-3 0-4-3l-1-4h5l5-10q1-3 4-3h5q4 0 3.500 4L26 24q-1 4-4 4z" fill="url(#copB)"/><path d="M14 1h4q3 0 4 3l1 4h-5z" fill="#1d48c8"/><path d="M15 11h3l-4 7.500h-3z" fill="#eee"/></svg></span>
    <span><svg viewBox="0 0 30 30"><path d="M0 3q0-1 1-1h9l3 3v4H0z" fill="#dc9a10"/><rect y="5" width="30" height="23" rx="1.500" fill="url(#fold)"/><path d="M5 28v-5q0-2 2-2h16q2 0 2 2v5z" fill="#1477c9"/><path d="M9 24.500h12" stroke="#0b4f94" stroke-width="1.300"/></svg></span>
    <span><svg viewBox="0 0 30 30"><circle cx="15" cy="15" r="15" fill="#0f6fc4"/><path d="M0 13Q2 0 15 0q14 1 15 12 0 7-8 7-5 0-4-3 1-2-1-4-8-6-17 1z" fill="url(#edgeA)"/><path d="M9 18q0 9 10 10 6 0 9-5-3 2-7 1.500Q13 23 12.500 15.500 13 11 17 11 11 8 9 18z" fill="#0d4f9c"/><path d="M12.500 13.500q-.5 8 7 9.500 5.500 1 10-2v-2.500q-4 2.500-8.500 1.500-3.500-1-3.500-3.500 0-4-5-3z" fill="#eee"/></svg></span>
    <span><svg viewBox="0 0 30 30"><path d="M8.500 7V3q0-2 2-2h9.500q2 0 2 2v4" fill="none" stroke="#2cb1ee" stroke-width="1.900"/><path d="M.5 5.500h29V25q0 4.500-4.500 4.500H5Q.5 29.500.5 25z" fill="url(#store)"/><path d="M9.500 12h5v5h-5z" fill="#f25022"/><path d="M15.500 12h5v5h-5z" fill="#7fba00"/><path d="M9.500 18h5v5h-5z" fill="#29a8ee"/><path d="M15.500 18h5v5h-5z" fill="#ffb900"/></svg></span>
    <span><svg viewBox="0 0 30 30"><rect width="30" height="30" fill="#1d40b0"/><path d="M12 6L9 9.500V24h10l3-3.500z" fill="#0e2a6e"/><path d="M12 6h3.500v11.500H22v3.300H12z" fill="#fff"/></svg></span>
    <span><svg viewBox="0 0 30 30"><path d="M1.500 0L15 6.500 28.500 0v22.500L15 30 1.500 22.500zM7 9v10.500l8 4.500 8-4.500V9l-8 4z" fill="#c22a2a" fill-rule="evenodd"/></svg></span>
    <span><svg viewBox="0 0 30 30"><path d="M15 0l4 2.500-5 9-3 5V26L1.500 20V8.500z" fill="url(#mA)"/><path d="M13 0h4l11.500 7.500V20l-9-4.500v-5l-5-2L9 12z" fill="url(#mB)"/><path d="M11 15l4 7 13.500-7v6.500L15 30 3 23l-1-3z" fill="#7d4cc0"/><circle cx="14.500" cy="15" r="4.500" fill="#eee"/></svg></span>
    <span><svg viewBox="0 0 30 30"><path d="M1.500 28.500l2-7.500A13 13 0 1 1 9 26.500z" fill="none" stroke="#1d8a53" stroke-width="2.500"/><path d="M9 8.500q2-2 3.500 1l.5 2-1.500 2q1.500 3 5 4.500l2-1.500 3 1.500q1 2.500-2.500 4Q10 22 8 12q0-2 1-3.500z" fill="#1d8a53"/></svg><em>29</em><u></u></span>
    <span class="on"><svg viewBox="0 0 30 30"><circle cx="15" cy="15" r="15" fill="#34a853"/><path d="M15 15L2 7.500A15 15 0 0 1 28 7.500z" fill="#e33b2e"/><path d="M28 7.500A15 15 0 0 1 15 30l6.500-11.500V7.500z" fill="#fbbc05"/><path d="M2 7.500L8.500 18.500 15 7.500z" fill="#e33b2e"/><circle cx="15" cy="15" r="7.500" fill="#fff"/><circle cx="15" cy="15" r="5.800" fill="#2f74ea"/></svg><u></u></span>
    <span><svg viewBox="0 0 30 30"><rect x="2" y="2" width="26" height="26" rx="3" fill="url(#pho)"/><path d="M2 23l10-10q2-2 4 0l12 12q0 3-3 3H5q-3 0-3-3z" fill="url(#phb)"/><path d="M8 28l8-8q1.500-1 3 0l8 7-2 1z" fill="#1273cc"/><circle cx="21.500" cy="6.500" r="2.600" fill="#fff"/></svg><u></u></span>
  </div>
  <div class="tray">
    <svg class="t1" width="14" height="9"><path d="M1 8l6-6.500L13 8" fill="none" stroke="#222" stroke-width="1.700"/></svg>
    <svg class="t2" width="20" height="17" viewBox="0 0 20 17"><path d="M4.500 14q-4-.5-4-4t4-4q1-5 6-5 4.500 0 6 4 3 2 2 5l-6 4z" fill="#8a8a8a" stroke="#333" stroke-width="1"/><circle cx="14.500" cy="11.500" r="5.500" fill="#0a66c2"/><path d="M14.500 10.500v4M14.500 7.900v1.500" stroke="#fff" stroke-width="1.500"/></svg>
    <svg class="t3" width="21" height="21" viewBox="0 0 21 21" fill="none" stroke="#222" stroke-width="1.500"><path d="M1 9.500Q2 1 10 1q6 0 9 5M19.500 1v5h-5M1.500 20v-5h5M2 15.500q3 4.500 8 4.500"/><circle cx="15" cy="15.500" r="5" fill="#ff9a0a" stroke="none"/></svg>
    <div class="lang">ENG<br>IN</div>
    <svg class="t4" width="21" height="16" viewBox="0 0 21 16" fill="none" stroke="#222" stroke-width="1.500"><path d="M1 6q9.500-9.500 19 0M4 9q6.500-6.500 13 0M7 12q3.500-3.500 7 0"/><circle cx="10.500" cy="14" r="1.600" fill="#222" stroke="none"/></svg>
    <svg class="t5" width="20" height="16" viewBox="0 0 20 16" fill="none" stroke="#222" stroke-width="1.400"><path d="M1 5.500h3l4.500-4v13L4 10.500H1zM11 5.500q1.500 2.500 0 5M13.500 3.500q3 4.500 0 9"/><path d="M16.500 1.500q4 6.500 0 13" stroke="#bbb"/></svg>
    <svg class="t6" width="21" height="17" viewBox="0 0 21 17"><path d="M7 5h9q1.500 0 1.500 1.500v6q0 1.500-1.500 1.500H6" fill="none" stroke="#222" stroke-width="1.500"/><path d="M18 8h2.500v4H18zM6.500 0q4 7 1.500 10.500Q5 13 2.500 11l-1 3.500Q-.5 8 6.500 0z" fill="#222"/></svg>
    <div class="clock">22:04<br>15-12-2024</div>
  </div>
</footer>
</body>
</html>
```
FILE: styles.css
```css
* { box-sizing: border-box; }
html, body { margin: 0; height: 1080px; overflow: hidden; }
body { font-family: "Open Sans", "Noto Sans", sans-serif; display: flex; flex-direction: column; width: 1920px; background: #f1f3f5; color: #000; }
svg { display: block; flex: none; }
button { border: 0; padding: 0; font: inherit; }
.defs { position: absolute; }

/* browser tab strip */
.tabs { height: 50px; background: #6a1212; display: flex; align-items: center; padding-left: 8px; flex: none; }
.tab-search { width: 35px; height: 34px; border-radius: 12px; background: #a51c1e; display: grid; place-items: center; margin-right: 6px; }
.tab { width: 160px; height: 50px; display: flex; align-items: center; padding-left: 11px; position: relative; color: #fff; font-size: 14.500px; letter-spacing: -.5px; flex: none; }
.tab.slim { width: 159px; }
.tab .f { width: 20px; height: 20px; }
.tab span { width: 73px; margin-left: 10px; overflow: hidden; white-space: nowrap; line-height: 24px; -webkit-mask-image: linear-gradient(90deg, #000 58%, transparent 99%); mask-image: linear-gradient(90deg, #000 58%, transparent 99%); }
.tab .c { width: 12px; height: 12px; margin-left: 13px; }
.tab::after { content: ""; width: 3px; height: 20px; background: #a51c1e; margin-left: 16px; }
.tab.bare::after, .tab.active::after { visibility: hidden; }
.tab.active { z-index: 0; }
.tab .shape { position: absolute; z-index: -1; left: -13px; top: 8px; }
.newtab { margin-left: 10px; }
.winctl { margin-left: auto; display: flex; gap: 43px; padding-right: 22px; }

.navwrap { background: #6a1212; flex: none; }
.nav { height: 58px; background: #a51c1e; display: flex; align-items: flex-start; border-radius: 10px 10px 0 0; }
.navbtns { display: flex; gap: 27px; width: 150px; padding: 21px 0 0 19px; }
.omni { width: 1507px; height: 42px; margin-top: 8px; border-radius: 21px; background: #821e1e; display: flex; align-items: center; padding-left: 7px; }
.site { width: 30px; height: 30px; border-radius: 15px; background: #a51c1e; display: grid; place-items: center; }
.url { color: #fff; font-size: 17px; letter-spacing: -.35px; margin-left: 9px; line-height: 24px; padding-top: 1px; }
.omni-icons { margin-left: auto; display: flex; align-items: center; gap: 19px; padding-right: 19px; }
.navright { display: flex; align-items: center; height: 58px; padding-left: 22px; }
.vr { width: 2px; height: 20px; background: #6f1515; }
.navright .vr { margin: 0 22px 0 20px; }
.leaf { margin-right: 23px; }
.avatar { width: 25px; height: 25px; border-radius: 50%; background: #33691e; color: #fff; font: 14px/25px Roboto, sans-serif; text-align: center; margin: 0 29px 0 22px; }
.bookmarks { height: 43px; background: #a51c1e; flex: none; display: flex; align-items: center; justify-content: space-between; padding: 0 18px 8px 14px; }
.allbm { display: flex; align-items: center; color: #fff; font-size: 14.500px; letter-spacing: -.18px; }
.allbm svg { margin: 0 9px 0 19px; }

/* application header */
.apphead { height: 81px; display: flex; border-bottom: 1.500px solid #d8dadd; flex: none; padding-left: 20px; }
.logo { margin-top: 18px; }
.titles { margin-left: 25px; }
h1 { font-size: 21.500px; font-weight: 400; margin: 12px 0 0; line-height: 32px; letter-spacing: -.22px; }
.menu { display: flex; font-size: 16.500px; line-height: 26px; margin-top: 6px; gap: 19.300px; letter-spacing: -.12px; padding-left: .5px; }
.menu em { font-style: normal; color: #777; font-size: 14.500px; letter-spacing: -.1px; }
.headright { margin-left: auto; width: 140px; padding-top: 7px; }
.headright > svg { margin: 0 0 5px 105.500px; }
.share { width: 97px; height: 38px; background: #f2931e; border-radius: 3px; font: 17.500px "Liberation Sans", Arial, sans-serif; display: flex; align-items: center; justify-content: center; gap: 6px; box-shadow: 0 0 0 1px #e3d9c8; padding-top: 1px; }
.toolbar { height: 48px; flex: none; display: flex; border-bottom: 1px solid #d5d7da; border-top: 1px solid #fff; background: #f1f3f5; padding-top: 9px; }
.g { height: 26px; display: flex; align-items: center; justify-content: center; border-right: 1.500px solid #dfe0e2; flex: none; }
.g svg:not(.k) { width: 24px; height: 24px; margin: 0 6.500px; }
.g .k { width: 10px; height: 6px; }
.g .pale { opacity: .7; }
.g1 { width: 83px; padding-left: 10px; }
.g1 svg:not(.k) { margin: 0 6px 0 0; }
.g2 { width: 98px; font-size: 16.500px; letter-spacing: -.35px; padding-left: 1px; gap: 14px; }
.g2 span { padding-top: 5px; }
.g3 { width: 90.300px; }
.g5 { width: 53px; }
.g7 { width: 127px; }
.g8 { width: 124px; justify-content: flex-start; padding-left: 15px; }
.g8 svg:not(.k) { margin: 0; }
.g8 .k { margin: 0 16px 0 5px; }
.g8 .k:last-child { margin-right: 0; }
.g9 { width: 71px; justify-content: flex-start; padding-left: 14px; }
.g10 { border: 0; width: 70px; justify-content: flex-start; padding-left: 12px; }
.g9 svg:not(.k), .g10 svg:not(.k) { margin: 0 6px 0 0; }
.tbright { margin-left: auto; display: flex; align-items: center; gap: 11px; height: 26px; padding-right: 21px; }

/* workspace */
.work { display: flex; height: 740px; flex: none; }
.side { width: 266px; border-right: 2px solid #d8dadd; position: relative; display: flex; flex-direction: column; overflow: hidden; }
.cats { width: 253px; }
.cat { height: 43.700px; border-bottom: 1.500px solid #dddfe2; font-weight: 600; font-size: 15px; line-height: 42px; padding-left: 25px; position: relative; letter-spacing: -.2px; }
.cat .tri { position: absolute; left: 8px; top: 14px; }
.cat.first { height: 19px; line-height: 0; }
.cat.first .tri { top: -9px; }
.cat.first { line-height: 20px; padding-top: 0; text-shadow: none; }
.cats { margin-top: -12px; }
.cat.first { height: 31px; line-height: 20px; }
.pal { display: grid; grid-template-columns: repeat(5, 45px); grid-auto-rows: 42.500px; padding: 7.500px 0 0 13px; }
.pal svg { width: 45px; height: 42.500px; overflow: visible; }
.pal svg > * { transform: translate(22.500px, 21.250px); }
.pal rect, .pal path, .pal circle, .pal ellipse { stroke: #000; stroke-width: 1.600; fill: none; }
.pal circle[fill] { fill: #000; }
.pal circle[fill="#f0a830"] { fill: #f0a830; stroke: none; }
.pal circle[stroke="red"] { stroke: red; stroke-width: 1.600; }
.pal .x { stroke-width: 2.600; }
.pal .r { stroke: red; }
.pal .y { fill: #ffffc0; stroke: red; }
.pal .k { fill: #000; }
.pal .w { fill: #f1f3f5; }
.pal .h { stroke: #999; stroke-width: 1; }
.pal .t { stroke: #999; stroke-width: .8; }
.pal .t2 { stroke: #999; stroke-width: 1.400; }
.pal text { font: 4.600px "Liberation Sans", Arial, sans-serif; text-anchor: middle; fill: #111; }
.pal .s { font-size: 3.200px; }
.pal .l { text-anchor: start; }
.pal .b { font-weight: 700; fill: #000; }
.pal .m { font-size: 6.300px; }
.pal .o { font-size: 5.200px; }
.vbar { position: absolute; right: 2px; top: 407px; width: 6px; height: 265px; border-radius: 3px; background: #d9dadc; }
.sidefoot { margin-top: auto; height: 66px; border-top: 1px solid #d5d7da; padding: 15px 0 0 61px; flex: none; }
.more { width: 143px; height: 35px; border-radius: 3px; background: linear-gradient(#4d90fe, #4787ed); color: #fff; font: 17.500px "Liberation Sans", Arial, sans-serif; display: flex; align-items: center; justify-content: center; gap: 7px; box-shadow: 0 0 0 1px #c6d3ea; }
.right { width: 1654px; }
.lbl text { font: 15px "Liberation Sans", Arial, sans-serif; text-anchor: middle; }
.pages { height: 46px; border-top: 1px solid #d8dadd; display: flex; align-items: center; }
.page { width: 91px; height: 45px; background: #fff; border: 1px solid #d8dadd; border-width: 0 1px; font-size: 15px; letter-spacing: -.4px; color: #444; display: flex; align-items: center; justify-content: center; gap: 8px; padding-left: 4px; }
.add { margin-left: 10px; }

/* notification */
.toast { position: absolute; left: 1423px; top: 883px; width: 478px; height: 118px; border-radius: 59px; background: #fff; box-shadow: 0 1px 8px rgba(0,0,0,.18); padding: 0 42px 0 32px; display: flex; align-items: flex-start; }
.ring { margin-top: 26.500px; }
.tbody { margin-left: 27px; width: 315px; padding-top: 17px; }
.brand { display: flex; align-items: center; height: 24px; color: #c01818; }
.brand b { font: 700 20.500px/24px Lato, sans-serif; margin-left: 6px; -webkit-text-stroke: .6px; }
.brand i { width: 1px; height: 15px; background: #c01818; margin: 0 13px 0 8px; }
.brand span { font-size: 14.500px; letter-spacing: -.25px; }
.toast p { margin: 6.500px 0 0; color: #4558f2; font: 19px/25px Lato, sans-serif; white-space: nowrap; }
.wide { letter-spacing: .58px; }
.tight { letter-spacing: .13px; }
.tclose { margin: 21px 0 0 -18px; }

/* taskbar */
.task { height: 60px; background: #eee; border-top: 1px solid #bbb; display: flex; align-items: center; flex: none; padding-bottom: 1px; }
.widget { margin-left: 26px; }
.start { margin-left: 446px; }
.search { width: 274px; height: 39px; margin-left: 16px; border: 1px solid #d5d5d5; border-radius: 20px; background: #fafafa; display: flex; align-items: center; padding-left: 13px; font-size: 16.500px; color: #555; letter-spacing: -.3px; }
.search span { margin-left: 11px; }
.moon { margin: 0 5px 0 auto; }
.apps { display: flex; margin-left: 4px; }
.apps span { width: 48px; height: 48px; margin: 0 3.550px; display: grid; place-items: center; position: relative; border-radius: 5px; }
.apps svg { width: 30px; height: 30px; }
.apps .on { background: #f9f9f9; box-shadow: 0 0 2px #ccc; }
.apps em { position: absolute; left: 17px; top: 3px; width: 26px; height: 20px; border-radius: 10px; background: #0a78d4; color: #fff; font: normal 13.500px/20px "Open Sans", sans-serif; text-align: center; }
.apps u { position: absolute; left: 20px; bottom: 0; width: 8px; height: 4px; border-radius: 2px; background: #888; }
.apps .on u { left: 14px; width: 20px; background: #0a78d4; }
.tray { margin-left: auto; display: flex; align-items: center; font-size: 14.500px; line-height: 20px; color: #222; padding-right: 24px; letter-spacing: -.4px; }
.t2 { margin-left: 23px; }
.t3 { margin-left: 19px; }
.lang { width: 34px; text-align: center; margin-left: 20px; }
.t4 { margin-left: 19px; }
.t5 { margin-left: 9px; }
.t6 { margin-left: 10px; }
.clock { width: 98px; text-align: right; letter-spacing: .15px; }
```
